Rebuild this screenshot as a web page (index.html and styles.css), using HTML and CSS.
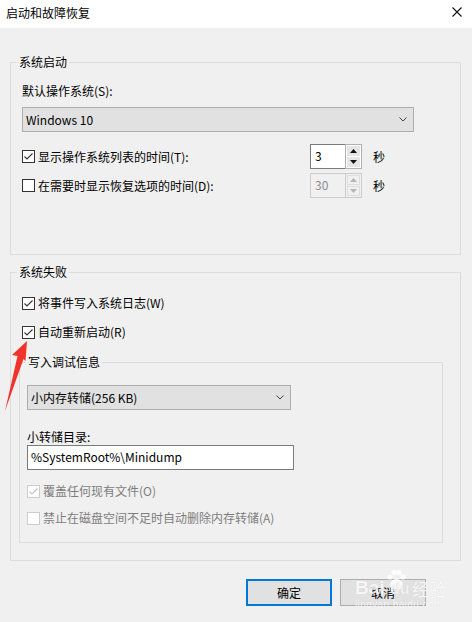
FILE: index.html
```html
<!DOCTYPE html>
<html lang="zh-CN">
<head>
<meta charset="utf-8">
<title>启动和故障恢复</title>
<link rel="stylesheet" href="styles.css">
</head>
<body>
<div class="titlebar">
  <span class="title">启动和故障恢复</span>
  <svg class="close" width="10" height="10" viewBox="0 0 10 10"><path d="M0.5 0.5L9.5 9.5M9.5 0.5L0.5 9.5" stroke="#111" stroke-width="1.1" fill="none"/></svg>
</div>
<div class="content">
  <div class="group g1">
    <div class="legend">系统启动</div>
    <div class="inner in1">
      <div class="lbl lbl-os">默认操作系统(S):</div>
      <div class="select sel-os"><span>Windows 10</span><svg class="chev" width="8" height="5" viewBox="0 0 8 5"><path d="M0.5 0.5L4 4L7.5 0.5" stroke="#444" stroke-width="1" fill="none"/></svg></div>
      <div class="srow sr1">
        <div class="cb">
          <span class="box"><svg width="11" height="11" viewBox="0 0 11 11"><path d="M1.5 5.5L4 8L9.5 2.5" stroke="#333" stroke-width="1.1" fill="none"/></svg></span>
          <span>显示操作系统列表的时间(T):</span>
        </div>
        <div class="spin">
          <div class="spin-input">3</div>
          <div class="spin-btns">
            <div class="sb"><svg width="7" height="4" viewBox="0 0 7 4"><path d="M0 4L3.5 0L7 4Z" fill="#111"/></svg></div>
            <div class="sb"><svg width="7" height="4" viewBox="0 0 7 4"><path d="M0 0L3.5 4L7 0Z" fill="#111"/></svg></div>
          </div>
        </div>
        <span class="unit">秒</span>
      </div>
      <div class="srow sr2">
        <div class="cb">
          <span class="box"></span>
          <span>在需要时显示恢复选项的时间(D):</span>
        </div>
        <div class="spin disabled">
          <div class="spin-input">30</div>
          <div class="spin-btns">
            <div class="sb"><svg width="7" height="4" viewBox="0 0 7 4"><path d="M0 4L3.5 0L7 4Z" fill="#b5b5b5"/></svg></div>
            <div class="sb"><svg width="7" height="4" viewBox="0 0 7 4"><path d="M0 0L3.5 4L7 0Z" fill="#b5b5b5"/></svg></div>
          </div>
        </div>
        <span class="unit">秒</span>
      </div>
    </div>
  </div>

  <div class="group g2">
    <div class="legend">系统失败</div>
    <div class="inner in2">
      <div class="cb crow c1">
        <span class="box"><svg width="11" height="11" viewBox="0 0 11 11"><path d="M1.5 5.5L4 8L9.5 2.5" stroke="#333" stroke-width="1.1" fill="none"/></svg></span>
        <span>将事件写入系统日志(W)</span>
      </div>
      <div class="cb crow c2">
        <span class="box"><svg width="11" height="11" viewBox="0 0 11 11"><path d="M1.5 5.5L4 8L9.5 2.5" stroke="#333" stroke-width="1.1" fill="none"/></svg></span>
        <span>自动重新启动(R)</span>
      </div>
    </div>
    <div class="group g3">
      <div class="legend">写入调试信息</div>
      <div class="inner in3">
        <div class="select sel-dump"><span>小内存转储(256 KB)</span><svg class="chev" width="8" height="5" viewBox="0 0 8 5"><path d="M0.5 0.5L4 4L7.5 0.5" stroke="#444" stroke-width="1" fill="none"/></svg></div>
        <div class="lbl lbl-dir">小转储目录:</div>
        <div class="textbox">%SystemRoot%\Minidump</div>
        <div class="cb crow c3 dis">
          <span class="box"><svg width="11" height="11" viewBox="0 0 11 11"><path d="M1.5 5.5L4 8L9.5 2.5" stroke="#c4c4c4" stroke-width="1.1" fill="none"/></svg></span>
          <span>覆盖任何现有文件(O)</span>
        </div>
        <div class="cb crow c4 dis">
          <span class="box"></span>
          <span>禁止在磁盘空间不足时自动删除内存转储(A)</span>
        </div>
      </div>
    </div>
  </div>

  <div class="buttons">
    <div class="btn btn-ok">确定</div>
    <div class="btn">取消</div>
  </div>
</div>

<svg class="arrow" width="40" height="90" viewBox="0 0 40 90"><path d="M27 11L12 25L17.5 26L5 81L23.5 29L25.5 31Z" fill="#f2332b"/></svg>

<div class="watermark">
  <span class="wm-bai">Bai</span>
  <svg class="wm-paw" width="22" height="22" viewBox="0 0 22 22">
    <circle cx="5" cy="8" r="2.6"/><circle cx="9" cy="3.5" r="2.6"/><circle cx="14" cy="3.5" r="2.6"/><circle cx="18" cy="8" r="2.6"/>
    <path d="M5 17C5 12 8 10 11.5 10C15 10 18 12 18 17C18 20 15 21 11.5 20C8 21 5 20 5 17Z"/>
  </svg>
  <span class="wm-du">du</span>
  <span class="wm-jy">经验</span>
  <span class="wm-url">jingyan.baidu.com</span>
</div>
</body>
</html>
```

FILE: styles.css
```css
body {
  margin: 0;
  width: 472px;
  height: 622px;
  background: #f0f0f0;
  font-family: "Noto Sans CJK SC", "Microsoft YaHei", sans-serif;
  font-size: 12px;
  color: #000;
  position: relative;
  overflow: hidden;
}

.titlebar {
  height: 28px;
  background: #fff;
  display: flex;
  align-items: center;
  justify-content: space-between;
  padding: 0 10px 0 6px;
  box-sizing: border-box;
}
.title { line-height: 16px; margin-top: -2px; }
.close { display: block; margin-top: -4px; }

.content { padding: 0 11px 0 10px; }

.group {
  border: 1px solid #dcdcdc;
  box-sizing: border-box;
}
.legend {
  display: table;
  margin: -9px 0 0 6px;
  padding: 0 2px;
  height: 16px;
  line-height: 16px;
  background: #f0f0f0;
}

.g1 { margin-top: 34px; height: 193px; }
.in1 { padding-left: 11px; }
.lbl { line-height: 16px; height: 16px; }
.lbl-os { margin-top: 13px; }

.select {
  height: 25px;
  box-sizing: border-box;
  border: 1px solid #adadad;
  background: #e1e1e1;
  display: flex;
  align-items: center;
  justify-content: space-between;
  padding: 0 6px 0 3px;
}
.select span { line-height: 16px; }
.chev { display: block; }
.sel-os { margin-top: 8px; width: 392px; }

.srow {
  display: flex;
  align-items: center;
  height: 25px;
}
.sr1 { margin-top: 12px; }
.sr2 { margin-top: 4px; }
.srow .cb { width: 288px; }

.cb {
  display: flex;
  align-items: center;
  height: 16px;
  line-height: 16px;
}
.box {
  width: 13px;
  height: 13px;
  box-sizing: border-box;
  border: 1px solid #333;
  background: #fff;
  margin-right: 3px;
  display: flex;
  align-items: center;
  justify-content: center;
  flex: none;
}
.box svg { display: block; }

.spin {
  width: 52px;
  height: 25px;
  display: flex;
}
.spin-input {
  width: 35px;
  box-sizing: border-box;
  border: 1px solid #7a7a7a;
  border-right: none;
  background: #fff;
  padding-left: 4px;
  line-height: 22px;
}
.spin-btns {
  width: 17px;
  box-sizing: border-box;
  border: 1px solid #b0b0b0;
  background: #fff;
  padding: 1px;
  display: flex;
  flex-direction: column;
  gap: 1px;
}
.sb {
  flex: 1;
  background: #e5e5e5;
  display: flex;
  align-items: center;
  justify-content: center;
}
.sb svg { display: block; }
.spin.disabled .spin-input {
  border-color: #cccccc;
  background: #f0f0f0;
  color: #8d8d8d;
}
.spin.disabled .spin-btns { border-color: #cccccc; background: #f0f0f0; }
.spin.disabled .sb { background: #f0f0f0; border: 1px solid #dedede; }
.unit { margin-left: 11px; line-height: 16px; }

.g2 { margin-top: 17px; height: 289px; }
.in2 { padding-left: 11px; }
.c1 { margin-top: 15px; }
.c2 { margin-top: 13px; }

.g3 { margin: 22px 17px 0 8px; height: 181px; }
.in3 { padding-left: 7px; }
.sel-dump { margin-top: 15px; width: 264px; }
.lbl-dir { margin-top: 19px; }
.textbox {
  width: 267px;
  height: 25px;
  box-sizing: border-box;
  border: 1px solid #7a7a7a;
  background: #fff;
  padding-left: 3px;
  line-height: 22px;
}
.c3 { margin-top: 13px; }
.c4 { margin-top: 11px; }
.dis { color: #7d7d7d; }
.dis .box { border-color: #cccccc; }

.buttons {
  margin-top: 18px;
  display: flex;
  justify-content: flex-end;
  gap: 8px;
  padding-right: 35px;
}
.btn {
  width: 86px;
  height: 27px;
  box-sizing: border-box;
  border: 1px solid #adadad;
  background: #e1e1e1;
  display: flex;
  align-items: center;
  justify-content: center;
  line-height: 16px;
}
.btn-ok { border: 2px solid #0078d7; }

.arrow {
  position: absolute;
  left: 0;
  top: 330px;
}

.watermark {
  position: absolute;
  left: 354px;
  top: 568px;
  width: 100px;
  height: 44px;
  color: rgba(255, 255, 255, 0.85);
  font-family: "Liberation Sans", sans-serif;
  text-shadow: 0 0 1px rgba(0, 0, 0, 0.1);
}
.watermark span { position: absolute; white-space: nowrap; }
.wm-bai { left: 1px; top: 9px; font-size: 19px; font-weight: bold; }
.wm-paw { position: absolute; left: 31px; top: 1px; fill: rgba(255, 255, 255, 0.85); }
.wm-du { left: 36px; top: 12px; font-size: 16px; font-weight: bold; color: #f0f0f0; }
.wm-jy { left: 58px; top: 8px; font-size: 17px; font-family: "Noto Sans CJK SC", sans-serif; }
.wm-url { left: 1px; top: 31px; font-size: 10px; letter-spacing: 0.4px; }
```
